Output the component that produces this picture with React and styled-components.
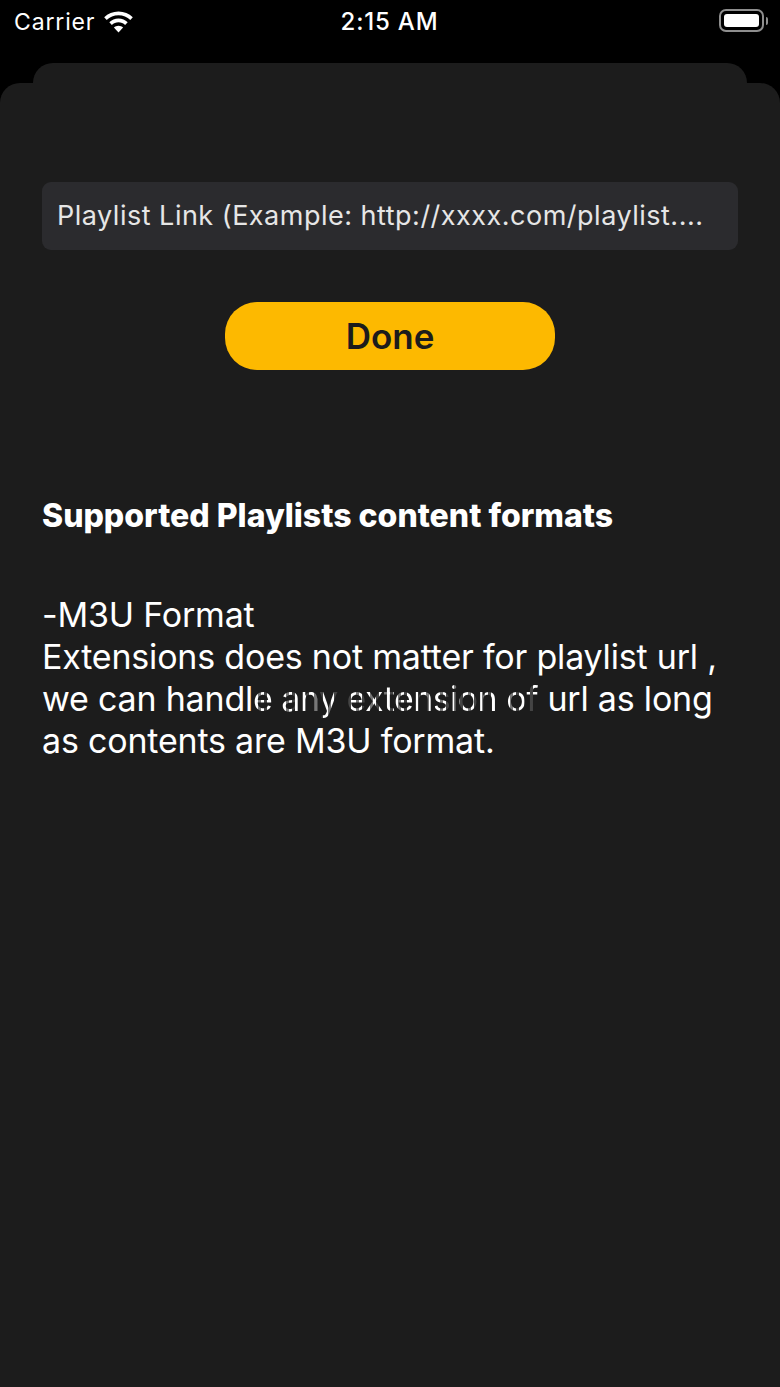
import styled, { createGlobalStyle } from "styled-components";

const GlobalStyle = createGlobalStyle`
	html, body {
		margin: 0;
		padding: 0;
		background: #000;
	}
	body {
		font-family: "Inter", "Liberation Sans", sans-serif;
	}
`;

export default function App() {
	return (
		<>
			<GlobalStyle />
			<Page>
				<StatusBar>
					<StatusLeft>
						<Carrier>Carrier</Carrier>
						<WifiIcon viewBox="0 0 30 22">
							<path d="M15 0.5C9.4 0.5 4.4 2.7 0.7 6.3L3.2 9C6.3 6 10.4 4.2 15 4.2s8.7 1.8 11.8 4.8l2.5-2.7C25.6 2.7 20.6 0.5 15 0.5z" />
							<path d="M15 7.6c-3.6 0-6.8 1.4-9.2 3.7l2.6 2.7c1.7-1.6 4-2.7 6.6-2.7s4.9 1.1 6.6 2.7l2.6-2.7C21.8 9 18.6 7.6 15 7.6z" />
							<path d="M15 14.8c-1.8 0-3.4 0.7-4.6 1.8L15 21.5l4.6-4.9C18.4 15.5 16.8 14.8 15 14.8z" />
						</WifiIcon>
					</StatusLeft>
					<Clock>2:15 AM</Clock>
					<StatusRight>
						<BatteryShell>
							<BatteryFill />
						</BatteryShell>
						<BatteryCap />
					</StatusRight>
				</StatusBar>
				<BackCard />
				<Sheet>
					<LinkField>
						<LinkText>Playlist Link (Example: http://xxxx.com/playlist....</LinkText>
					</LinkField>
					<DoneButton>Done</DoneButton>
					<Heading>Supported Playlists content formats</Heading>
					<Body>
						-M3U Format
						<br />
						Extensions does not matter for playlist url ,
						<br />
						we can handl<GhostedRun>e any extension of</GhostedRun> url as long
						<br />
						as contents are M3U format.
					</Body>
				</Sheet>
			</Page>
		</>
	);
}

const Page = styled.div`
	width: 780px;
	height: 1387px;
	display: flex;
	flex-direction: column;
	background: #000;
	overflow: hidden;
`;

const StatusBar = styled.div`
	height: 43px;
	padding: 0 12px 0 14px;
	display: grid;
	grid-template-columns: 1fr auto 1fr;
	align-items: center;
	color: #fff;
	flex-shrink: 0;
`;

const StatusLeft = styled.div`
	display: flex;
	align-items: center;
	gap: 8px;
`;

const Carrier = styled.span`
	font-size: 23px;
	line-height: 26px;
	letter-spacing: 0.85px;
`;

const WifiIcon = styled.svg`
	width: 31px;
	height: 22px;
	fill: #fff;
`;

const Clock = styled.span`
	font-size: 24px;
	font-weight: 500;
	line-height: 26px;
	letter-spacing: 0.8px;
	margin-left: -3px;
`;

const StatusRight = styled.div`
	display: flex;
	align-items: center;
	justify-content: flex-end;
	gap: 2px;
	margin-bottom: 2px;
`;

const BatteryShell = styled.div`
	box-sizing: border-box;
	width: 45px;
	height: 23px;
	padding: 3px;
	border: 2px solid #8e8e8e;
	border-radius: 7px;
`;

const BatteryFill = styled.div`
	height: 100%;
	background: #fff;
	border-radius: 3px;
`;

const BatteryCap = styled.div`
	width: 2px;
	height: 8px;
	background: #8e8e8e;
	border-radius: 0 2px 2px 0;
`;

const BackCard = styled.div`
	height: 20px;
	margin: 20px 33px 0;
	background: #1c1c1c;
	border-radius: 20px 20px 0 0;
	flex-shrink: 0;
`;

const Sheet = styled.div`
	flex: 1;
	padding: 99px 42px 0;
	display: flex;
	flex-direction: column;
	background: #1c1c1c;
	border-radius: 20px 20px 0 0;
`;

const LinkField = styled.div`
	height: 68px;
	padding: 0 15px;
	display: flex;
	align-items: center;
	background: #2b2b2e;
	border-radius: 9px;
`;

const LinkText = styled.span`
	font-size: 27px;
	line-height: 32px;
	letter-spacing: 0.5px;
	color: #e6e6e6;
	white-space: nowrap;
`;

const DoneButton = styled.div`
	width: 330px;
	height: 68px;
	margin: 52px auto 0;
	display: flex;
	align-items: center;
	justify-content: center;
	background: #fdb900;
	border-radius: 32px;
	font-size: 35px;
	font-weight: 600;
	color: #1c1c1c;
`;

const Heading = styled.div`
	margin-top: 127px;
	font-size: 32px;
	font-weight: 800;
	line-height: 38px;
	letter-spacing: 0;
	color: #fff;
`;

const Body = styled.div`
	margin-top: 59px;
	font-size: 34px;
	line-height: 42px;
	letter-spacing: -0.2px;
	color: #fff;
	white-space: nowrap;
`;

const GhostedRun = styled.span`
	letter-spacing: -0.55px;
	color: transparent;
	background: repeating-linear-gradient(90deg, #fff 0 5px, #777 5px 8px, #fff 8px 11px, #444 11px 14px);
	-webkit-background-clip: text;
	background-clip: text;
`;
